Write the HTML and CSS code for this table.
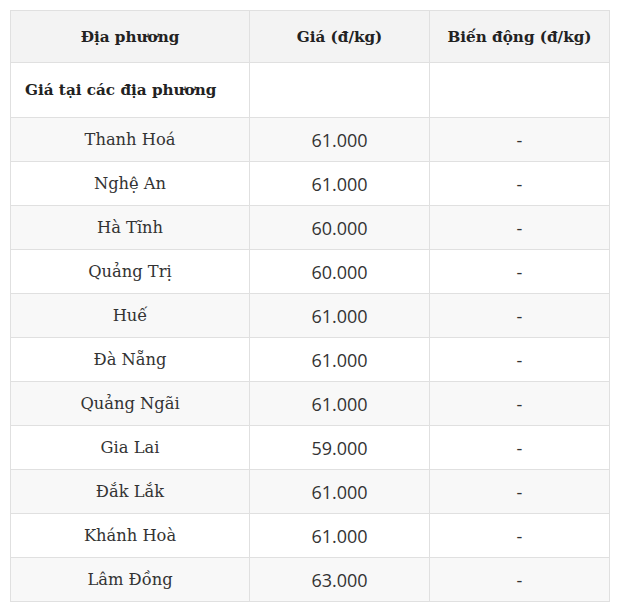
FILE: index.html
```html
<!DOCTYPE html>
<html lang="vi">
<head>
<meta charset="utf-8">
<link rel="stylesheet" href="styles.css">
</head>
<body>
<table class="price-table">
  <colgroup>
    <col class="col-place">
    <col class="col-price">
    <col class="col-change">
  </colgroup>
  <thead>
    <tr class="head-row">
      <th>Địa phương</th>
      <th>Giá (đ/kg)</th>
      <th>Biến động (đ/kg)</th>
    </tr>
  </thead>
  <tbody>
    <tr class="group-row">
      <td class="group-title">Giá tại các địa phương</td>
      <td></td>
      <td></td>
    </tr>
    <tr class="data-row"><td class="place">Thanh Hoá</td><td class="num">61.000</td><td class="num">-</td></tr>
    <tr class="data-row"><td class="place">Nghệ An</td><td class="num">61.000</td><td class="num">-</td></tr>
    <tr class="data-row"><td class="place">Hà Tĩnh</td><td class="num">60.000</td><td class="num">-</td></tr>
    <tr class="data-row"><td class="place">Quảng Trị</td><td class="num">60.000</td><td class="num">-</td></tr>
    <tr class="data-row"><td class="place">Huế</td><td class="num">61.000</td><td class="num">-</td></tr>
    <tr class="data-row"><td class="place">Đà Nẵng</td><td class="num">61.000</td><td class="num">-</td></tr>
    <tr class="data-row"><td class="place">Quảng Ngãi</td><td class="num">61.000</td><td class="num">-</td></tr>
    <tr class="data-row"><td class="place">Gia Lai</td><td class="num">59.000</td><td class="num">-</td></tr>
    <tr class="data-row"><td class="place">Đắk Lắk</td><td class="num">61.000</td><td class="num">-</td></tr>
    <tr class="data-row"><td class="place">Khánh Hoà</td><td class="num">61.000</td><td class="num">-</td></tr>
    <tr class="data-row"><td class="place">Lâm Đồng</td><td class="num">63.000</td><td class="num">-</td></tr>
  </tbody>
</table>
</body>
</html>
```
FILE: styles.css
```css
html, body {
  margin: 0;
  padding: 0;
  background: #ffffff;
}
body {
  padding: 10px;
  font-family: "DejaVu Serif", "Liberation Serif", serif;
  color: #333333;
}
.price-table {
  border-collapse: collapse;
  width: 600px;
  table-layout: fixed;
}
.col-place { width: 239px; }
.col-price { width: 180px; }
.col-change { width: 180px; }
.price-table th,
.price-table td {
  border: 1px solid #e0e0e0;
  padding: 0 6px;
  text-align: center;
  vertical-align: middle;
  white-space: nowrap;
  line-height: 20px;
}
.head-row th {
  height: 51px;
  background: #f3f3f3;
  font-weight: bold;
  font-size: 15.2px;
  color: #222222;
}
.group-row td {
  height: 54px;
  background: #ffffff;
}
.price-table .group-title {
  text-align: left;
  padding-left: 14px;
  font-weight: bold;
  font-size: 15.2px;
  color: #222222;
}
.data-row td {
  height: 42px;
  font-size: 16.3px;
  padding-top: 1px;
}
.data-row:nth-child(even) td {
  background: #f8f8f8;
}
.data-row:nth-child(odd) td {
  background: #ffffff;
}
.place {
  font-family: "DejaVu Serif", "Liberation Serif", serif;
  color: #333333;
}
.price-table .num {
  font-family: "Open Sans", "Noto Sans", sans-serif;
  font-size: 18px;
  color: #333333;
}
```
